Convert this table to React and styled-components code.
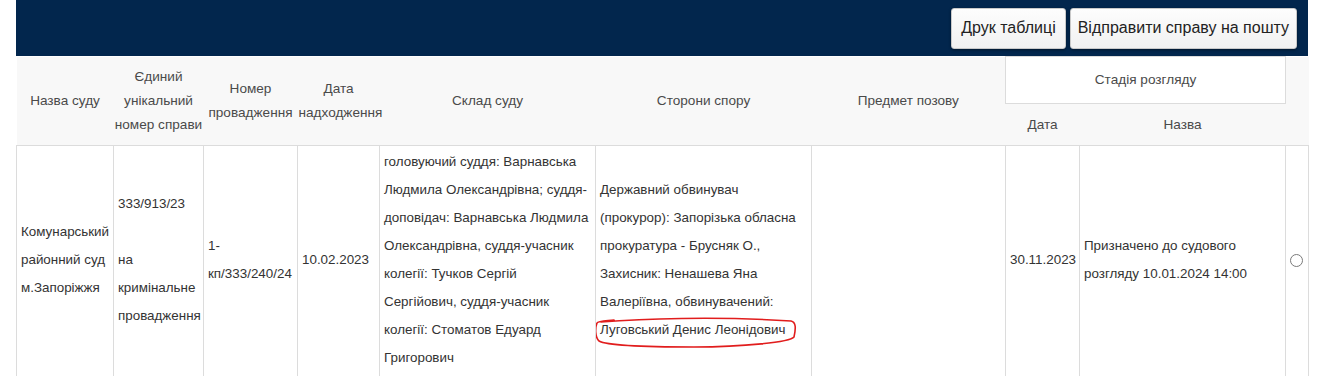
import React from 'react';
import styled, { createGlobalStyle } from 'styled-components';

const GlobalStyle = createGlobalStyle`
  body {
    margin: 0;
    background: #fff;
    font-family: "Liberation Sans", Arial, sans-serif;
  }
`;

const Page = styled.div`
  padding: 0 10px 0 16px;
  width: 1292px;
`;

const TopBar = styled.div`
  height: 56px;
  background-color: #02264d;
  display: flex;
  justify-content: flex-end;
  align-items: center;
  gap: 4px;
  padding-right: 11px;
  box-sizing: border-box;
`;

const ToolButton = styled.button`
  height: 41px;
  padding: 0 ${(p) => p.$pad || 9}px;
  font-family: "Liberation Sans", Arial, sans-serif;
  font-size: 16px;
  color: #222;
  background: linear-gradient(#fdfdfd, #f1f1f1);
  border: 1px solid #c9c9c9;
  border-radius: 3px;
  box-shadow: 0 1px 3px rgba(0, 0, 0, 0.45);
  cursor: pointer;
`;

const Table = styled.table`
  width: 1292px;
  table-layout: fixed;
  border-collapse: collapse;
  font-family: "Liberation Sans", Arial, sans-serif;
`;

const HeadRow = styled.tr`
  background-color: #f8f8f8;
  height: ${(p) => p.$h}px;
`;

const Th = styled.th`
  font-weight: normal;
  font-size: 13.6px;
  line-height: 24px;
  color: #4a4a4a;
  text-align: center;
  vertical-align: middle;
  padding: 0 1px;
`;

const StageTh = styled(Th)`
  background-color: #fff;
  border: 1px solid #dcdcdc;
`;

const Td = styled.td`
  border: 1px solid #dcdcdc;
  font-size: 13.4px;
  line-height: 28px;
  color: #333;
  vertical-align: middle;
  padding: 2px 3px 5px 4px;
  white-space: nowrap;
  overflow: hidden;
`;

const Marked = styled.span`
  position: relative;
`;

const Scribble = styled.svg`
  position: absolute;
  left: -6px;
  top: -9px;
  width: 206px;
  height: 40px;
  pointer-events: none;
  overflow: visible;
`;

const Radio = styled.input`
  appearance: none;
  width: 13px;
  height: 13px;
  margin: 0;
  border: 1px solid #7a7a7a;
  border-radius: 50%;
  background: #fff;
  vertical-align: middle;
`;

const widths = [97, 90, 94, 82, 216, 216, 194, 74, 206, 23];

const Lines = ({ items }) =>
  items.map((t, i) => (
    <React.Fragment key={i}>
      {i > 0 && <br />}
      {t}
    </React.Fragment>
  ));

const App = () => {
  return (
    <Page>
      <GlobalStyle />
      <TopBar>
        <ToolButton>Друк таблиці</ToolButton>
        <ToolButton $pad={7}>Відправити справу на пошту</ToolButton>
      </TopBar>
      <Table>
        <colgroup>
          {widths.map((w, i) => (
            <col key={i} style={{ width: w }} />
          ))}
        </colgroup>
        <thead>
          <HeadRow $h={47}>
            <Th rowSpan={2}>Назва суду</Th>
            <Th rowSpan={2}>Єдиний унікальний номер справи</Th>
            <Th rowSpan={2}>Номер провадження</Th>
            <Th rowSpan={2}>Дата надходження</Th>
            <Th rowSpan={2}>Склад суду</Th>
            <Th rowSpan={2}>Сторони спору</Th>
            <Th rowSpan={2}>Предмет позову</Th>
            <StageTh colSpan={2}>Стадія розгляду</StageTh>
            <Th rowSpan={2}></Th>
          </HeadRow>
          <HeadRow $h={42}>
            <Th>Дата</Th>
            <Th>Назва</Th>
          </HeadRow>
        </thead>
        <tbody>
          <tr>
            <Td>
              <Lines items={['Комунарський', 'районний суд', 'м.Запоріжжя']} />
            </Td>
            <Td>
              <Lines items={['333/913/23', '', 'на', 'кримінальне', 'провадження']} />
            </Td>
            <Td>
              <Lines items={['1-', 'кп/333/240/24']} />
            </Td>
            <Td>10.02.2023</Td>
            <Td>
              <Lines
                items={[
                  'головуючий суддя: Варнавська',
                  'Людмила Олександрівна; суддя-',
                  'доповідач: Варнавська Людмила',
                  'Олександрівна, суддя-учасник',
                  'колегії: Тучков Сергій',
                  'Сергійович, суддя-учасник',
                  'колегії: Стоматов Едуард',
                  'Григорович',
                ]}
              />
            </Td>
            <Td>
              <Lines
                items={[
                  'Державний обвинувач',
                  '(прокурор): Запорізька обласна',
                  'прокуратура - Брусняк О.,',
                  'Захисник: Ненашева Яна',
                  'Валеріївна, обвинувачений:',
                ]}
              />
              <br />
              <Marked>
                Луговський Денис Леонідович
                <Scribble viewBox="0 0 206 40">
                  <path
                    d="M 7 9 C 45 6, 120 3, 197 8 C 202 9, 202 15, 200 24 C 196 29, 150 34, 100 34 C 52 34, 12 32, 5 28 C 1 24, 1 15, 3 10 C 4 8, 10 8, 20 7"
                    fill="none"
                    stroke="#e11d1d"
                    strokeWidth="1.6"
                    strokeLinecap="round"
                  />
                </Scribble>
              </Marked>
            </Td>
            <Td></Td>
            <Td>30.11.2023</Td>
            <Td>
              <Lines items={['Призначено до судового', 'розгляду 10.01.2024 14:00']} />
            </Td>
            <Td>
              <Radio type="radio" name="case" />
            </Td>
          </tr>
        </tbody>
      </Table>
    </Page>
  );
};

export default App;
